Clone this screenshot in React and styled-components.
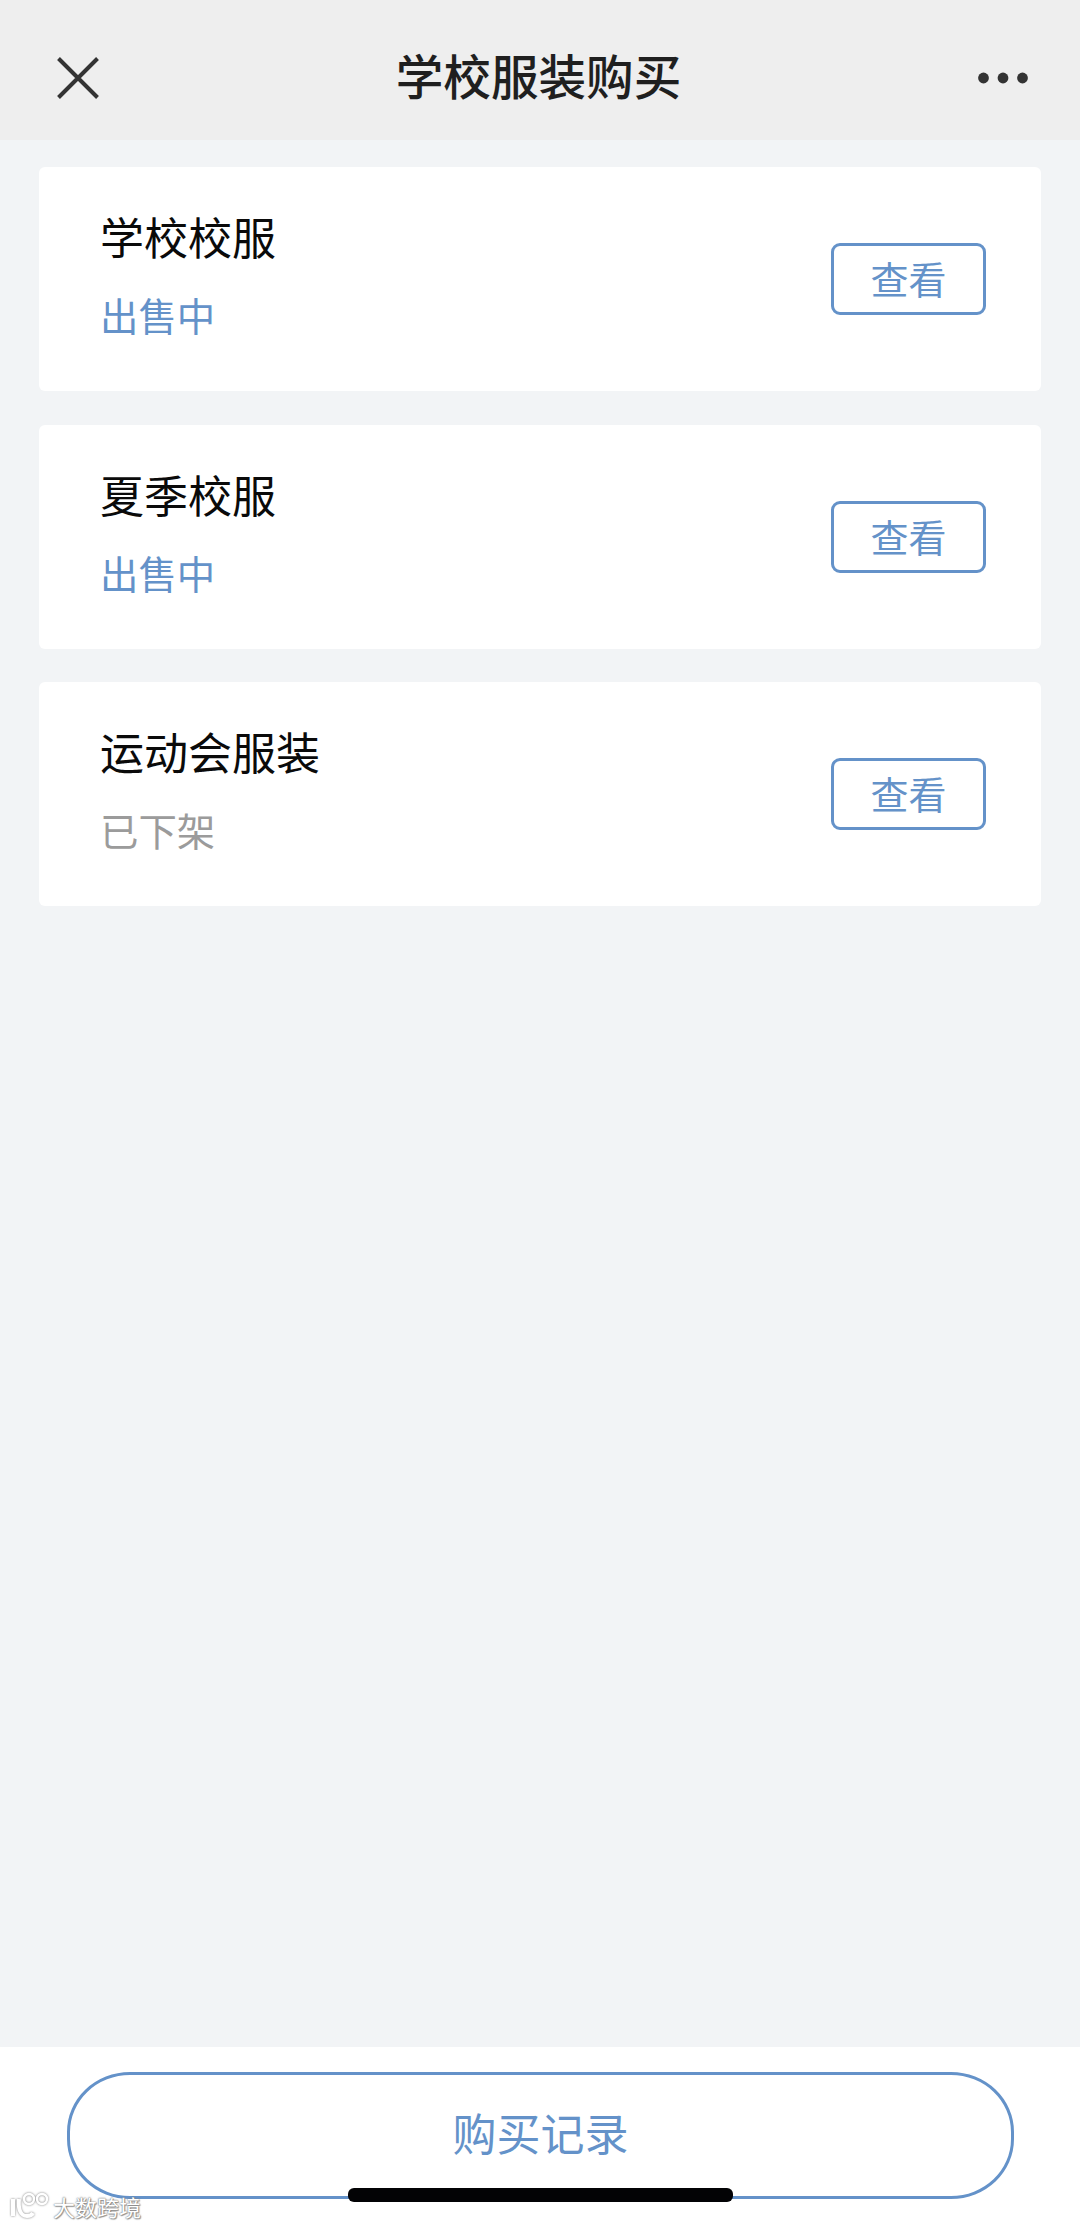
import React from "react";
import styled, { createGlobalStyle } from "styled-components";

const Global = createGlobalStyle`
  html, body { margin: 0; padding: 0; background: #f2f4f6; }
  * { box-sizing: border-box; }
`;
const FONT = `"Noto Sans CJK SC", "Noto Sans", sans-serif`;
const BLUE = "#6492c9";

const Page = styled.div`
  position: relative;
  width: 1080px;
  height: 2224px;
  overflow: hidden;
  display: flex;
  flex-direction: column;
  background: #f2f4f6;
  font-family: ${FONT};
`;
const NavBar = styled.header`
  flex: none;
  height: 140px;
  background: #eeeeee;
  display: flex;
  align-items: center;
  justify-content: space-between;
  padding: 16px 52px 0 57px;
`;
const NavTitle = styled.h1`
  margin: 0 0 6px;
  font-size: 47.6px;
  font-weight: 500;
  line-height: 64px;
  color: #1f1f1f;
`;
const List = styled.main`
  flex: 1;
  display: flex;
  flex-direction: column;
  gap: 33.5px;
  padding: 27px 39px;
`;
const Card = styled.section`
  height: 224px;
  background: #ffffff;
  border-radius: 6px;
  display: flex;
  align-items: center;
  justify-content: space-between;
  padding: 0 55px 0 62px;
`;
const Info = styled.div`
  display: flex;
  flex-direction: column;
  gap: 22px;
  margin: 0 0 12px -1px;
`;
const Name = styled.div`
  font-size: 44px;
  line-height: 60px;
  color: #0a0a0a;
`;
const Status = styled.div`
  font-size: 38.4px;
  line-height: 52px;
  color: ${(p) => (p.$off ? "#9b9b9b" : BLUE)};
`;
const ViewButton = styled.button`
  width: 155px;
  height: 72px;
  padding: 0 0 2px;
  background: #fff;
  border: 3px solid ${BLUE};
  border-radius: 9px;
  font-family: ${FONT};
  font-size: 38px;
  line-height: 1;
  color: ${BLUE};
`;
const Footer = styled.footer`
  flex: none;
  height: 177px;
  background: #fff;
  padding: 25px 66px 0 67px;
`;
const RecordButton = styled.button`
  display: block;
  width: 100%;
  height: 127px;
  padding: 0 0 8px;
  background: #fff;
  border: 3px solid ${BLUE};
  border-radius: 63px / 60px;
  font-family: ${FONT};
  font-size: 44px;
  line-height: 1;
  color: ${BLUE};
`;
const HomeBar = styled.div`
  position: absolute;
  left: 348px;
  top: 2188px;
  width: 385px;
  height: 14px;
  border-radius: 6px;
  background: #030305;
`;
const Watermark = styled.div`
  position: absolute;
  left: 9px;
  top: 2191px;
  display: flex;
  align-items: center;
  gap: 3px;
  font-size: 22px;
  line-height: 30px;
  color: #fff;
  text-shadow: 0 0 2px #7d7d7d, 0 0 1px #7d7d7d, 1px 1px 1px #9a9a9a;
`;

const CloseIcon = () => (
  <svg width="42" height="42" viewBox="0 0 42 42" fill="none" stroke="#333" strokeWidth="4">
    <path d="M1.5 1.5 40.5 40.5M40.5 1.5 1.5 40.5" />
  </svg>
);
const MoreIcon = () => (
  <svg width="50" height="12" viewBox="0 0 50 12" fill="#333">
    <circle cx="5.5" cy="6" r="5.4" />
    <circle cx="25" cy="6" r="5.4" />
    <circle cx="44.5" cy="6" r="5.4" />
  </svg>
);
const LogoMark = () => (
  <svg width="41" height="30" viewBox="0 0 41 30" fill="none" stroke="#fff" strokeWidth="4"
       style={{ filter: "drop-shadow(0 0 1px #7d7d7d)" }}>
    <path d="M4 8v17M10 8c-1 9 1 17 8 17 3 0 5-1 6-3" />
    <circle cx="20" cy="8" r="5" strokeWidth="2.4" />
    <circle cx="33" cy="8" r="5" strokeWidth="2.4" />
  </svg>
);

const items = [
  { name: "学校校服", status: "出售中" },
  { name: "夏季校服", status: "出售中" },
  { name: "运动会服装", status: "已下架", off: true },
];

export default function App() {
  return (
    <Page>
      <Global />
      <NavBar>
        <CloseIcon />
        <NavTitle>学校服装购买</NavTitle>
        <MoreIcon />
      </NavBar>
      <List>
        {items.map((it) => (
          <Card key={it.name}>
            <Info>
              <Name>{it.name}</Name>
              <Status $off={it.off}>{it.status}</Status>
            </Info>
            <ViewButton>查看</ViewButton>
          </Card>
        ))}
      </List>
      <Footer>
        <RecordButton>购买记录</RecordButton>
      </Footer>
      <HomeBar />
      <Watermark>
        <LogoMark />
        大数跨境
      </Watermark>
    </Page>
  );
}
